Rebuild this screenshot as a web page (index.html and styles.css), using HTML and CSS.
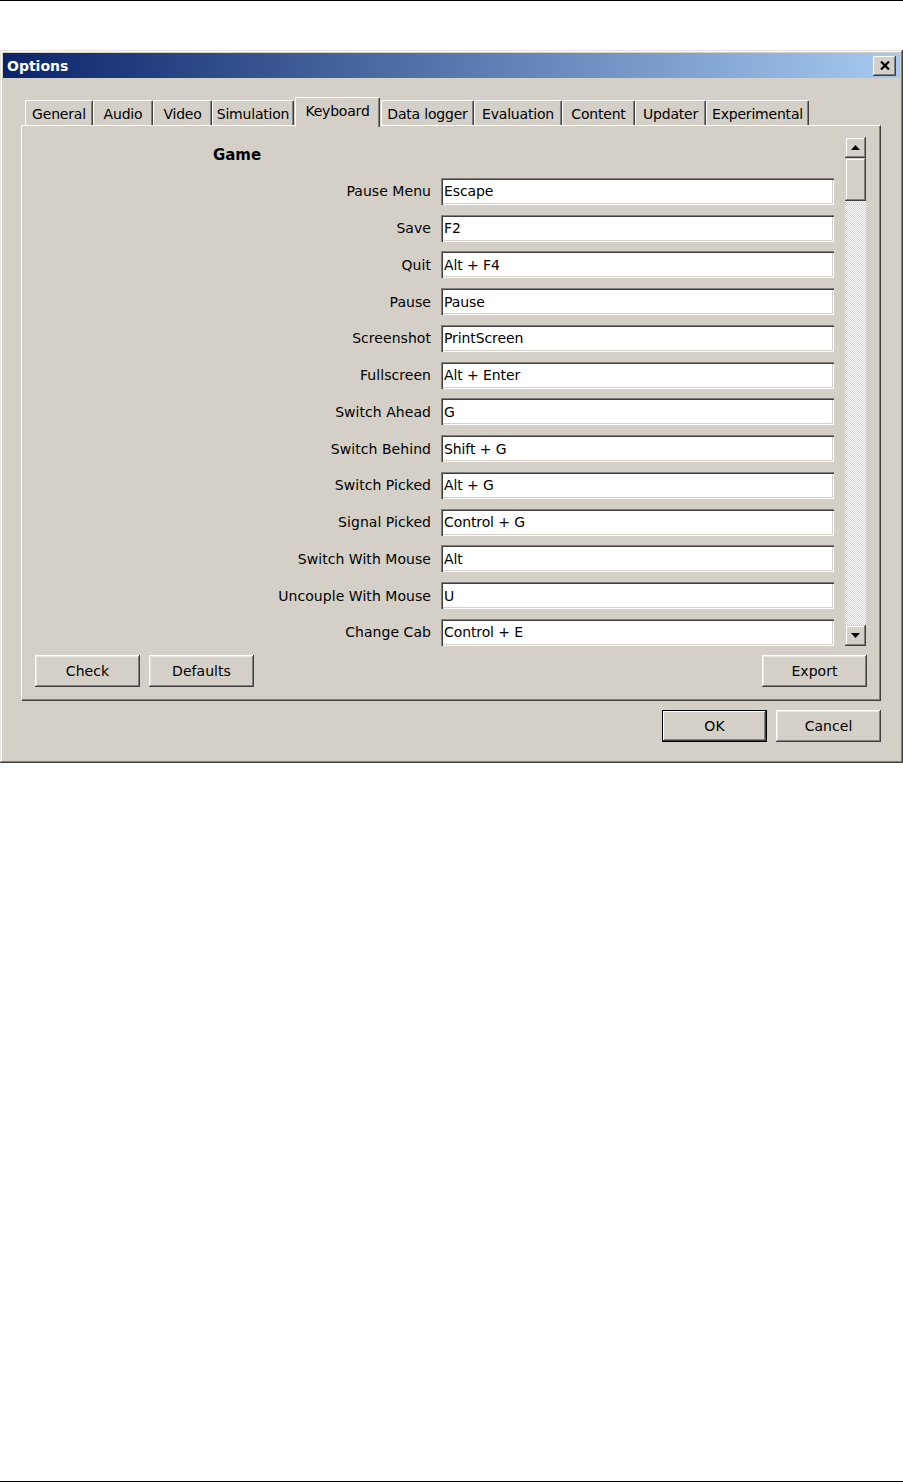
FILE: index.html
```html
<!DOCTYPE html>
<html>
<head>
<meta charset="utf-8">
<title>Options</title>
<link rel="stylesheet" href="styles.css">
</head>
<body>
<div class="rule"></div>
<div class="dialog">
  <div class="titlebar">
    <span class="title">Options</span>
    <div class="close"><svg width="10" height="9" viewBox="0 0 10 9"><path d="M1 0.5L9 8.5M9 0.5L1 8.5" stroke="#000" stroke-width="2.2" fill="none"/></svg></div>
  </div>
  <div class="content">
    <div class="tabs">
      <div class="tab t-general">General</div>
      <div class="tab t-audio">Audio</div>
      <div class="tab t-video">Video</div>
      <div class="tab t-sim">Simulation</div>
      <div class="tab t-key active">Keyboard</div>
      <div class="tab t-log">Data logger</div>
      <div class="tab t-eval">Evaluation</div>
      <div class="tab t-content">Content</div>
      <div class="tab t-upd">Updater</div>
      <div class="tab t-exp">Experimental</div>
    </div>
    <div class="panel">
      <div class="scroll">
        <div class="form">
          <div class="hdr">Game</div>
          <div class="lbl">Pause Menu</div><div class="field">Escape</div>
          <div class="lbl">Save</div><div class="field">F2</div>
          <div class="lbl">Quit</div><div class="field">Alt + F4</div>
          <div class="lbl">Pause</div><div class="field">Pause</div>
          <div class="lbl">Screenshot</div><div class="field">PrintScreen</div>
          <div class="lbl">Fullscreen</div><div class="field">Alt + Enter</div>
          <div class="lbl">Switch Ahead</div><div class="field">G</div>
          <div class="lbl">Switch Behind</div><div class="field">Shift + G</div>
          <div class="lbl">Switch Picked</div><div class="field">Alt + G</div>
          <div class="lbl">Signal Picked</div><div class="field">Control + G</div>
          <div class="lbl">Switch With Mouse</div><div class="field">Alt</div>
          <div class="lbl">Uncouple With Mouse</div><div class="field">U</div>
          <div class="lbl">Change Cab</div><div class="field">Control + E</div>
        </div>
        <div class="sbar">
          <div class="sbtn"><svg width="9" height="5" viewBox="0 0 9 5"><path d="M4.5 0L9 5H0z" fill="#000"/></svg></div>
          <div class="thumb"></div>
          <div class="sbtn down"><svg width="9" height="5" viewBox="0 0 9 5"><path d="M0 0H9L4.5 5z" fill="#000"/></svg></div>
        </div>
      </div>
      <div class="panel-buttons">
        <div class="btn">Check</div>
        <div class="btn">Defaults</div>
        <div class="btn push">Export</div>
      </div>
    </div>
    <div class="dialog-buttons">
      <div class="btn default">OK</div>
      <div class="btn">Cancel</div>
    </div>
  </div>
</div>
<div class="rule rule-bottom"></div>
</body>
</html>
```
FILE: styles.css
```css
* { box-sizing: border-box; }
html, body { margin: 0; padding: 0; }
body {
  background: #fff;
  width: 903px;
  height: 1482px;
  display: flex;
  flex-direction: column;
  font-family: "DejaVu Sans", "Noto Sans", sans-serif;
  font-size: 14px;
  letter-spacing: 0.05px;
  color: #000;
  overflow: hidden;
}
.rule { height: 1px; background: #000; flex: none; }
.rule-bottom { margin-top: auto; }

.dialog {
  margin-top: 49px;
  width: 903px;
  height: 713px;
  flex: none;
  background: #d4d0c8;
  padding: 3px;
  box-shadow: inset -1px -1px #404040, inset 1px 1px #e4e2dc, inset -2px -2px #808080, inset 2px 2px #fff;
  display: flex;
  flex-direction: column;
}
.titlebar {
  height: 25px;
  flex: none;
  display: flex;
  align-items: center;
  justify-content: space-between;
  padding: 0 4px;
  background: linear-gradient(to right, #0a246a, #a6caf0);
}
.title { color: #fff; font-weight: bold; letter-spacing: 0; }
.close {
  width: 23px;
  height: 20px;
  background: #d4d0c8;
  display: flex;
  align-items: center;
  justify-content: center;
  box-shadow: inset -1px -1px #404040, inset 1px 1px #fff, inset -2px -2px #808080;
}

.content {
  flex: 1;
  padding: 19px 19px 0 18px;
  display: flex;
  flex-direction: column;
}
.tabs {
  display: flex;
  align-items: flex-end;
  height: 28px;
  padding-left: 4px;
  flex: none;
}
.tab {
  height: 25px;
  padding-top: 1px;
  display: flex;
  align-items: center;
  justify-content: center;
  border-top: 1px solid #fff;
  border-left: 1px solid #fff;
  border-right: 1px solid #404040;
  box-shadow: inset -1px 0 #808080;
  border-radius: 2px 2px 0 0;
  white-space: nowrap;
  letter-spacing: -0.2px;
  background: #d4d0c8;
  flex: none;
}
.t-general { width: 68px; }
.t-audio { width: 60px; }
.t-video { width: 59px; }
.t-sim { width: 82px; margin-right: 1px; }
.t-key { width: 85px; margin-right: 1px; }
.t-log { width: 93px; }
.t-eval { width: 88px; }
.t-content { width: 73px; }
.t-upd { width: 71px; }
.t-exp { width: 103px; }
.tab.active {
  height: 30px;
  margin-bottom: -2px;
  padding: 0 0 4px 0;
  position: relative;
  z-index: 1;
}

.panel {
  height: 576px;
  flex: none;
  border-top: 1px solid #fff;
  border-left: 1px solid #fff;
  border-right: 1px solid #404040;
  border-bottom: 1px solid #404040;
  box-shadow: inset -1px -1px #808080;
  padding: 11px 0 13px;
  display: flex;
  flex-direction: column;
}
.scroll {
  display: flex;
  height: 509px;
  flex: none;
  padding: 0 14px 0 21px;
}
.form {
  flex: 1;
  overflow: hidden;
  display: grid;
  grid-template-columns: 388px 393px;
  column-gap: 10px;
  grid-template-rows: 36px;
  grid-auto-rows: 36.75px;
  align-items: center;
  align-content: start;
}
.hdr {
  grid-column: 1;
  text-align: center;
  font-weight: bold;
  font-size: 15px;
  letter-spacing: 0;
}
.lbl { grid-column: 1; text-align: right; white-space: nowrap; }
.field {
  grid-column: 2;
  height: 27px;
  background: #fff;
  box-shadow: inset 1px 1px #808080, inset 2px 2px #404040, inset -1px -1px #fff, inset -2px -2px #d4d0c8;
  padding: 0 4px 0 3px;
  display: flex;
  align-items: center;
  white-space: nowrap;
  letter-spacing: -0.1px;
}

.sbar {
  width: 21px;
  flex: none;
  margin-left: 11px;
  display: flex;
  flex-direction: column;
  background-color: #fff;
  background-image: conic-gradient(#d4d0c8 25%, #fff 0 50%, #d4d0c8 0 75%, #fff 0);
  background-size: 2px 2px;
}
.sbtn, .thumb {
  flex: none;
  background: #d4d0c8;
  box-shadow: inset -1px -1px #404040, inset 1px 1px #d4d0c8, inset -2px -2px #808080, inset 2px 2px #fff;
}
.sbtn {
  height: 21px;
  display: flex;
  align-items: center;
  justify-content: center;
}
.sbtn.down { margin-top: auto; }
.thumb { height: 43px; }

.btn {
  width: 105px;
  height: 32px;
  flex: none;
  display: flex;
  align-items: center;
  justify-content: center;
  background: #d4d0c8;
  box-shadow: inset -1px -1px #404040, inset 1px 1px #fff, inset -2px -2px #808080, inset 2px 2px #e8e6e0;
}
.btn.default {
  box-shadow: inset 0 0 0 1px #000, inset -2px -2px #404040, inset 2px 2px #fff, inset -3px -3px #808080;
}
.panel-buttons {
  display: flex;
  gap: 9px;
  margin-top: 9px;
  padding: 0 13px;
}
.push { margin-left: auto; }
.dialog-buttons {
  display: flex;
  justify-content: flex-end;
  gap: 9px;
  margin-top: 9px;
}
```
